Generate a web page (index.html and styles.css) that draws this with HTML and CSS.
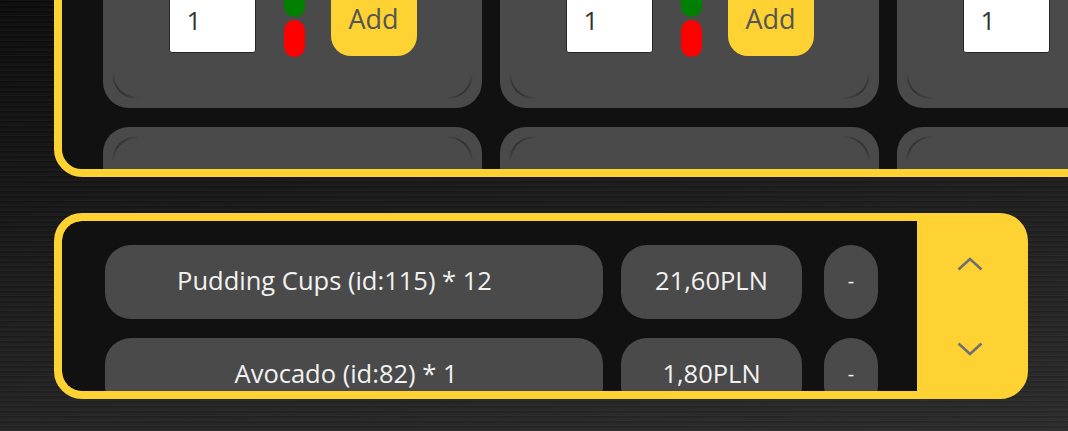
FILE: index.html
```html
<!DOCTYPE html>
<html lang="en">
<head>
<meta charset="utf-8">
<title>Shop</title>
<link rel="stylesheet" href="styles.css">
</head>
<body>
  <section class="catalog">
    <div class="grid">
      <div class="card"><i class="rim"></i><div class="controls"><input class="qty" value="1"><div class="lights"><span class="light green"></span><span class="light red"></span></div><button class="add">Add</button></div></div>
      <div class="card"><i class="rim"></i><div class="controls"><input class="qty" value="1"><div class="lights"><span class="light green"></span><span class="light red"></span></div><button class="add">Add</button></div></div>
      <div class="card"><i class="rim"></i><div class="controls"><input class="qty" value="1"><div class="lights"><span class="light green"></span><span class="light red"></span></div><button class="add">Add</button></div></div>
      <div class="card"><i class="rim"></i></div>
      <div class="card"><i class="rim"></i></div>
      <div class="card"><i class="rim"></i></div>
    </div>
  </section>

  <section class="cart">
    <div class="cart-list">
      <div class="cart-row">
        <div class="cell name name-long">Pudding Cups (id:115) * 12</div>
        <div class="cell price">21,60PLN</div>
        <div class="cell remove">-</div>
      </div>
      <div class="cart-row">
        <div class="cell name name-short">Avocado (id:82) * 1</div>
        <div class="cell price">1,80PLN</div>
        <div class="cell remove">-</div>
      </div>
    </div>
    <div class="scroll">
      <button class="scroll-btn" aria-label="Scroll up">
        <svg width="26" height="14" viewBox="0 0 26 14"><polyline points="1.5,12.5 13,2 24.5,12.5" fill="none" stroke="#707070" stroke-width="2.6"/></svg>
      </button>
      <button class="scroll-btn" aria-label="Scroll down">
        <svg width="26" height="14" viewBox="0 0 26 14"><polyline points="1.5,1.5 13,12 24.5,1.5" fill="none" stroke="#707070" stroke-width="2.6"/></svg>
      </button>
    </div>
  </section>
</body>
</html>
```

FILE: styles.css
```css
html, body {
  margin: 0;
  padding: 0;
}

body {
  width: 1068px;
  height: 431px;
  overflow: hidden;
  font-family: "Open Sans", "Noto Sans", sans-serif;
  background:
    repeating-linear-gradient(180deg, rgba(255,255,255,0.03) 0 1px, rgba(0,0,0,0.09) 1px 2px, transparent 2px 3px, rgba(255,255,255,0.015) 3px 5px),
    linear-gradient(172deg, #0c0c0c 0%, #181818 40%, #222222 70%, #2b2b2b 100%);
}

/* ---------- product catalog ---------- */
.catalog {
  box-sizing: border-box;
  margin: -92px 0 0 54px;
  width: 1100px;
  height: 269px;
  border: 8px solid #fed232;
  border-radius: 0 0 0 28px;
  background: #111111;
  padding: 20px 0 0 41px;
  overflow: hidden;
}

.grid {
  display: grid;
  grid-template-columns: repeat(3, 379px);
  grid-auto-rows: 172px;
  column-gap: 18px;
  row-gap: 19px;
}

.card {
  position: relative;
  box-sizing: border-box;
  background: #4a4a4a;
  border-radius: 26px;
  display: flex;
  justify-content: center;
  align-items: flex-end;
  padding-bottom: 51px;
}

/* inner rim arcs at the corners */
.card::before,
.card::after,
.rim::before,
.rim::after {
  content: "";
  position: absolute;
  box-sizing: border-box;
  width: 26px;
  height: 25px;
  border: 0 solid #2f2f2f;
}

.card::before {
  left: 9px;
  bottom: 9px;
  border-left-width: 2px;
  border-bottom-width: 2px;
  border-bottom-left-radius: 25px;
  -webkit-mask-image: radial-gradient(circle at 0% 100%, #000 9px, transparent 27px);
  mask-image: radial-gradient(circle at 0% 100%, #000 9px, transparent 27px);
}

.card::after {
  right: 9px;
  bottom: 9px;
  border-right-width: 2px;
  border-bottom-width: 2px;
  border-bottom-right-radius: 25px;
  -webkit-mask-image: radial-gradient(circle at 100% 100%, #000 9px, transparent 27px);
  mask-image: radial-gradient(circle at 100% 100%, #000 9px, transparent 27px);
}

.rim {
  position: absolute;
  inset: 0;
  pointer-events: none;
}

.rim::before {
  left: 9px;
  top: 9px;
  border-left-width: 2px;
  border-top-width: 2px;
  border-top-left-radius: 25px;
  -webkit-mask-image: radial-gradient(circle at 0% 0%, #000 9px, transparent 27px);
  mask-image: radial-gradient(circle at 0% 0%, #000 9px, transparent 27px);
}

.rim::after {
  right: 9px;
  top: 9px;
  border-right-width: 2px;
  border-top-width: 2px;
  border-top-right-radius: 25px;
  -webkit-mask-image: radial-gradient(circle at 100% 0%, #000 9px, transparent 27px);
  mask-image: radial-gradient(circle at 100% 0%, #000 9px, transparent 27px);
}

.controls {
  display: flex;
  align-items: flex-end;
}

.qty {
  box-sizing: border-box;
  width: 87px;
  height: 66px;
  margin: 0 0 4px 0;
  padding: 0 0 0 17px;
  border: 1.5px solid #262626;
  border-radius: 3px;
  background: #ffffff;
  color: #333333;
  font-family: "Open Sans", "Noto Sans", sans-serif;
  font-size: 26px;
  outline: none;
}

.lights {
  display: flex;
  flex-direction: column;
  gap: 3px;
  margin-left: 28px;
}

.light {
  display: block;
  width: 21px;
  height: 37px;
  border-radius: 11px;
}

.green { background: #008000; }
.red { background: #ff0000; }

.add {
  width: 86px;
  height: 76px;
  margin: 0 0 1px 26px;
  border: none;
  border-radius: 20px;
  background: #fed232;
  color: #555555;
  font-family: "Open Sans", "Noto Sans", sans-serif;
  font-size: 27px;
  padding: 0;
}

/* ---------- cart ---------- */
.cart {
  box-sizing: border-box;
  display: flex;
  margin: 36px 0 0 54px;
  width: 974px;
  height: 186px;
  border: 8px solid #fed232;
  border-radius: 28px;
  background: #fed232;
  overflow: hidden;
}

.cart-list {
  flex: 1;
  display: flex;
  flex-direction: column;
  gap: 19px;
  padding: 24px 0 0 43px;
  background: #111111;
  border-radius: 20px 0 0 20px;
  overflow: hidden;
}

.cart-row {
  flex: none;
  display: flex;
  height: 74px;
}

.cell {
  display: flex;
  align-items: center;
  justify-content: center;
  background: #4a4a4a;
  border-radius: 26px;
  color: #f2f2f2;
  font-size: 25.5px;
  line-height: 1;
  padding-bottom: 2px;
  box-sizing: border-box;
}

.name { width: 498px; }
.name-long { padding-right: 39px; }
.name-short { padding-right: 16px; }
.price { width: 181px; margin-left: 18px; }
.remove { width: 54px; margin-left: 22px; border-radius: 27px; font-size: 20px; }

.scroll {
  flex: none;
  width: 103px;
  display: flex;
  flex-direction: column;
}

.scroll-btn {
  flex: 1;
  display: flex;
  align-items: center;
  justify-content: center;
  border: none;
  background: transparent;
  padding: 0 0 0 3px;
}
```
